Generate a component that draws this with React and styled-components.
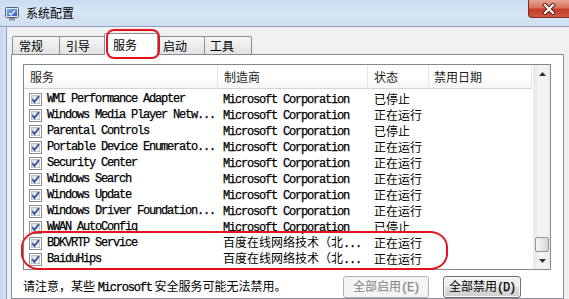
import styled, { createGlobalStyle } from "styled-components"

const GlobalStyle = createGlobalStyle`
    body {
        margin: 0;
        background: #f0f0f0;
    }
`

const services = [
    { name: "WMI Performance Adapter", maker: "Microsoft Corporation", status: "已停止" },
    { name: "Windows Media Player Netw...", maker: "Microsoft Corporation", status: "正在运行" },
    { name: "Parental Controls", maker: "Microsoft Corporation", status: "已停止" },
    { name: "Portable Device Enumerato...", maker: "Microsoft Corporation", status: "正在运行" },
    { name: "Security Center", maker: "Microsoft Corporation", status: "正在运行" },
    { name: "Windows Search", maker: "Microsoft Corporation", status: "正在运行" },
    { name: "Windows Update", maker: "Microsoft Corporation", status: "正在运行" },
    { name: "Windows Driver Foundation...", maker: "Microsoft Corporation", status: "正在运行" },
    { name: "WWAN AutoConfig", maker: "Microsoft Corporation", status: "已停止" },
    { name: "BDKVRTP Service", maker: "百度在线网络技术（北...", status: "正在运行" },
    { name: "BaiduHips", maker: "百度在线网络技术（北...", status: "正在运行" },
]

const tabs = [
    { label: "常规", w: 48, ml: 0, pl: 6 },
    { label: "引导", w: 48, ml: -1, pl: 6 },
    { label: "服务", w: 54, ml: -3, pl: 8, active: true },
    { label: "启动", w: 49, ml: -2, pl: 6 },
    { label: "工具", w: 48, ml: -1, pl: 5 },
]

const columns = [
    { label: "服务", w: 194, pl: 6 },
    { label: "制造商", w: 150, pl: 6 },
    { label: "状态", w: 61, pl: 6 },
    { label: "禁用日期", w: 103, pl: 5 },
]

// ascii runs are drawn in the narrow song-style mono, the rest in the CJK face
function MixedText({ text }) {
    const parts = text.match(/[\x00-\x7f]+|[^\x00-\x7f]+/g) || []
    return parts.map((p, i) => /[\x00-\x7f]/.test(p[0]) ? <Mono key={i}>{p}</Mono> : <span key={i}>{p}</span>)
}

function AppIcon() {
    return (
        <svg width="14" height="14" viewBox="0 0 14 14">
            <defs>
                <linearGradient id="scr" x1="0" y1="0" x2="1" y2="1">
                    <stop offset="0" stopColor="#7fb2ee" />
                    <stop offset="1" stopColor="#2a62c4" />
                </linearGradient>
            </defs>
            <rect x="0.5" y="0.5" width="13" height="10" rx="1" fill="#e4e8ee" stroke="#56606c" />
            <rect x="2" y="2" width="10" height="7" fill="url(#scr)" />
            <path d="M4 6 L6 8 L10 3.5" stroke="#ffffff" strokeWidth="1.2" fill="none" />
            <rect x="4" y="11" width="6" height="2.5" fill="#8a929b" />
        </svg>
    )
}

function CloseGlyph() {
    return (
        <svg width="14" height="12" viewBox="0 0 14 12">
            <path d="M3 2 L11 10 M11 2 L3 10" stroke="#5a1a12" strokeWidth="4" strokeLinecap="square" />
            <path d="M3 2 L11 10 M11 2 L3 10" stroke="#ffffff" strokeWidth="2.2" strokeLinecap="square" />
        </svg>
    )
}

function CheckBox() {
    return (
        <svg width="13" height="13" viewBox="0 0 13 13">
            <defs>
                <linearGradient id="cb" x1="0" y1="0" x2="1" y2="1">
                    <stop offset="0" stopColor="#d9dade" />
                    <stop offset="1" stopColor="#fbfbfb" />
                </linearGradient>
            </defs>
            <rect x="0.5" y="0.5" width="12" height="12" fill="#ffffff" stroke="#8e8f8f" />
            <rect x="2.5" y="2.5" width="8" height="8" fill="url(#cb)" stroke="#c2c4c8" />
            <path d="M3.2 6.2 L5.4 9 L10 3" stroke="#34519c" strokeWidth="1.9" fill="none" />
        </svg>
    )
}

function Arrow({ up }) {
    return (
        <svg width="7" height="4" viewBox="0 0 7 4">
            <path d={up ? "M0 4 L3.5 0 L7 4 Z" : "M0 0 L7 0 L3.5 4 Z"} fill="#303030" />
        </svg>
    )
}

export default function App() {
    return (
        <>
            <GlobalStyle />
            <Window>
                <TitleBar>
                    <IconSlot><AppIcon /></IconSlot>
                    <Title>系统配置</Title>
                    <CloseButton><CloseGlyph /></CloseButton>
                </TitleBar>
                <Body>
                    <Frame />
                    <Client>
                        <TabStrip>
                            {tabs.map((t) => (
                                <Tab key={t.label} $w={t.w} $ml={t.ml} $pl={t.pl} $active={t.active}>{t.label}</Tab>
                            ))}
                        </TabStrip>
                        <Panel>
                            <ListView>
                                <Table>
                                    <Header>
                                        {columns.map((c) => (
                                            <HeaderCell key={c.label} $w={c.w} $pl={c.pl}>{c.label}</HeaderCell>
                                        ))}
                                    </Header>
                                    <Rows>
                                        {services.map((s) => (
                                            <Row key={s.name}>
                                                <NameCell $w={194}>
                                                    <CheckBox />
                                                    <MixedText text={s.name} />
                                                </NameCell>
                                                <Cell $w={150} $pl={5}><MixedText text={s.maker} /></Cell>
                                                <Cell $w={61} $pl={6}>{s.status}</Cell>
                                                <Cell $w={103} $pl={5} />
                                            </Row>
                                        ))}
                                    </Rows>
                                </Table>
                                <ScrollBar>
                                    <ScrollButton><Arrow up /></ScrollButton>
                                    <Track />
                                    <Thumb />
                                    <ScrollButton><Arrow /></ScrollButton>
                                </ScrollBar>
                            </ListView>
                            <Footer>
                                <Note>请注意，某些 <Mono>Microsoft</Mono> 安全服务可能无法禁用。</Note>
                                <Buttons>
                                    <Button $w={86} disabled>全部启用<Mono>(E)</Mono></Button>
                                    <Button $w={78}>全部禁用<Mono>(D)</Mono></Button>
                                </Buttons>
                            </Footer>
                        </Panel>
                    </Client>
                </Body>
                <TabMark />
                <RowsMark />
            </Window>
        </>
    )
}

const Window = styled.div`
    position: relative;
    width: 569px;
    height: 299px;
    overflow: hidden;
    background: #f0f0f0;
    font-family: "Noto Sans CJK SC", "Liberation Sans", sans-serif;
    font-size: 12px;
    color: #000;
    display: flex;
    flex-direction: column;
`

const TitleBar = styled.div`
    height: 26px;
    flex-shrink: 0;
    display: flex;
    align-items: flex-start;
    background: linear-gradient(180deg, #c8dbf0 0%, #d8e6f6 45%, #cfdff2 100%);
    border-bottom: 1px solid #8fa1b8;
`

const IconSlot = styled.div`
    width: 14px;
    height: 14px;
    margin: 7px 0 0 5px;
`

const Title = styled.div`
    margin: 4px 0 0 7px;
    line-height: 18px;
    font-size: 12px;
`

const CloseButton = styled.div`
    margin-left: auto;
    width: 41px;
    height: 18px;
    box-sizing: border-box;
    display: flex;
    align-items: center;
    justify-content: center;
    border: 1px solid #7a2a1e;
    border-top: none;
    border-right: none;
    border-radius: 0 0 0 4px;
    background: linear-gradient(180deg, #e8a493 0%, #d7725c 45%, #c23f28 55%, #d0593f 100%);
`

const Body = styled.div`
    flex: 1;
    display: flex;
    min-height: 0;
`

const Frame = styled.div`
    width: 6px;
    flex-shrink: 0;
    background: linear-gradient(90deg, #c6d9ef, #d4e3f4);
    border-right: 1px solid #8fa1b8;
`

const Client = styled.div`
    flex: 1;
    padding-left: 4px;
    display: flex;
    flex-direction: column;
`

const TabStrip = styled.div`
    height: 27px;
    padding-left: 1px;
    display: flex;
    align-items: flex-end;
    position: relative;
    z-index: 1;
`

const Tab = styled.div`
    box-sizing: border-box;
    width: ${(p) => p.$w}px;
    height: ${(p) => (p.$active ? 22 : 18)}px;
    margin-left: ${(p) => p.$ml}px;
    margin-bottom: ${(p) => (p.$active ? -1 : 0)}px;
    padding-left: ${(p) => p.$pl}px;
    padding-top: ${(p) => (p.$active ? 2 : 0)}px;
    line-height: 17px;
    border: 1px solid #898c95;
    border-bottom: none;
    border-radius: 2px 2px 0 0;
    background: ${(p) => (p.$active ? "#ffffff" : "linear-gradient(180deg, #f7f7f7 0%, #ececec 50%, #e2e2e2 100%)")};
    position: relative;
    z-index: ${(p) => (p.$active ? 2 : 1)};
`

const Panel = styled.div`
    width: 553px;
    box-sizing: border-box;
    flex: 1;
    background: #ffffff;
    border: 1px solid #898c95;
    padding: 9px 12px 0 11px;
`

const ListView = styled.div`
    height: 206px;
    box-sizing: border-box;
    border: 1px solid #828790;
    display: flex;
    background: #ffffff;
`

const Table = styled.div`
    width: 508px;
    display: flex;
    flex-direction: column;
`

const Header = styled.div`
    height: 23px;
    display: flex;
    border-bottom: 1px solid #d5d5d5;
    background: linear-gradient(180deg, #ffffff 0%, #ffffff 55%, #f5f6f7 100%);
`

const HeaderCell = styled.div`
    box-sizing: border-box;
    width: ${(p) => p.$w}px;
    padding-left: ${(p) => p.$pl}px;
    border-right: 1px solid #e3e5e8;
    line-height: 23px;
    color: #1a1a1a;
`

const Rows = styled.div`
    padding-top: 2px;
`

const Row = styled.div`
    height: 16px;
    display: flex;
    align-items: center;
`

const Cell = styled.div`
    box-sizing: border-box;
    width: ${(p) => p.$w}px;
    padding-left: ${(p) => p.$pl}px;
    line-height: 16px;
    white-space: nowrap;
    overflow: hidden;
`

const NameCell = styled(Cell)`
    display: flex;
    align-items: center;
    gap: 5px;
    padding-left: 5px;

    svg {
        flex-shrink: 0;
    }
`

const Mono = styled.span`
    font-family: "Liberation Mono", monospace;
    font-size: 12px;
    letter-spacing: -1.2px;
    white-space: pre;
    -webkit-text-stroke: 0.25px currentColor;
`

const ScrollBar = styled.div`
    width: 17px;
    margin-left: 1px;
    display: flex;
    flex-direction: column;
    background: linear-gradient(90deg, #e7e7e7 0%, #f3f3f3 30%, #f3f3f3 70%, #ececec 100%);
    border-left: 1px solid #ececec;
`

const ScrollButton = styled.div`
    height: 17px;
    display: flex;
    align-items: center;
    justify-content: center;
`

const Track = styled.div`
    flex: 1;
`

const Thumb = styled.div`
    height: 15px;
    margin: 0 1px;
    box-sizing: border-box;
    border: 1px solid #979797;
    border-radius: 2px;
    background: linear-gradient(90deg, #f4f4f4 0%, #e8e8e8 50%, #d6d6d6 100%);
`

const Footer = styled.div`
    height: 22px;
    margin-top: 6px;
    display: flex;
    align-items: center;
`

const Note = styled.div`
    flex: 1;
    line-height: 16px;
`

const Buttons = styled.div`
    display: flex;
    gap: 14px;
    margin-right: 30px;
`

const Button = styled.button`
    width: ${(p) => p.$w}px;
    height: 22px;
    padding: 0;
    font-family: "Noto Sans CJK SC", sans-serif;
    font-size: 12px;
    line-height: 18px;
    color: #000;
    border: 1px solid #707070;
    border-radius: 3px;
    background: linear-gradient(180deg, #f2f2f2 0%, #ebebeb 50%, #dddddd 51%, #cfcfcf 100%);
    box-shadow: inset 0 0 0 1px #fbfbfb;

    &:disabled {
        color: #838383;
        border-color: #adb2b5;
        background: #f4f4f4;
        box-shadow: none;
    }
`

const TabMark = styled.div`
    position: absolute;
    left: 106px;
    top: 29px;
    width: 54px;
    height: 30px;
    box-sizing: border-box;
    border: 2.5px solid #e5121c;
    border-radius: 8px;
    z-index: 5;
`

const RowsMark = styled.div`
    position: absolute;
    left: 21px;
    top: 231px;
    width: 427px;
    height: 39px;
    box-sizing: border-box;
    border: 2.5px solid #e5121c;
    border-radius: 18px / 16px;
    z-index: 5;
`
